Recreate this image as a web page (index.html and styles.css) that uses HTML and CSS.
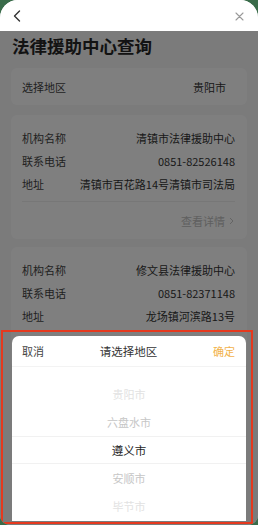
FILE: index.html
```html
<!DOCTYPE html>
<html lang="zh-CN">
<head>
<meta charset="utf-8">
<title>法律援助中心查询</title>
<link rel="stylesheet" href="styles.css">
</head>
<body>
<div class="phone">
  <header class="nav">
    <svg class="nav-back" width="8" height="12" viewBox="0 0 8 12"><path d="M6.5 1 L1.5 6 L6.5 11" fill="none" stroke="#333" stroke-width="1.4" stroke-linecap="round" stroke-linejoin="round"/></svg>
    <svg class="nav-close" width="9" height="9" viewBox="0 0 9 9"><path d="M1 1 L8 8 M8 1 L1 8" fill="none" stroke="#9a9a9a" stroke-width="1.1" stroke-linecap="round"/></svg>
  </header>
  <main class="page">
    <h1 class="title">法律援助中心查询</h1>
    <section class="card region">
      <span class="label">选择地区</span>
      <span class="value">贵阳市</span>
    </section>
    <section class="card org">
      <div class="row"><span class="label">机构名称</span><span class="value">清镇市法律援助中心</span></div>
      <div class="row"><span class="label">联系电话</span><span class="value">0851-82526148</span></div>
      <div class="row"><span class="label">地址</span><span class="value">清镇市百花路14号清镇市司法局</span></div>
      <div class="divider"></div>
      <div class="detail">查看详情<svg class="chev" width="5" height="8" viewBox="0 0 5 8"><path d="M1 1 L4 4 L1 7" fill="none" stroke="#c8c8c8" stroke-width="1"/></svg></div>
    </section>
    <section class="card org org-2">
      <div class="row"><span class="label">机构名称</span><span class="value">修文县法律援助中心</span></div>
      <div class="row"><span class="label">联系电话</span><span class="value">0851-82371148</span></div>
      <div class="row"><span class="label">地址</span><span class="value">龙场镇河滨路13号</span></div>
    </section>
  </main>
  <div class="mask"></div>
  <div class="popup">
    <div class="popup-head">
      <span class="cancel">取消</span>
      <span class="popup-title">请选择地区</span>
      <span class="confirm">确定</span>
    </div>
    <div class="picker">
      <div class="item far">贵阳市</div>
      <div class="item near">六盘水市</div>
      <div class="item selected">遵义市</div>
      <div class="item near">安顺市</div>
      <div class="item far">毕节市</div>
    </div>
  </div>
  <div class="annot"></div>
</div>
</body>
</html>
```

FILE: styles.css
```css
* { box-sizing: border-box; }
html, body { margin: 0; padding: 0; }
body {
  background: #3a6c4a;
  font-family: "Noto Sans CJK SC", "Noto Sans", sans-serif;
  width: 258px;
  height: 525px;
  overflow: hidden;
}
.phone {
  position: relative;
  width: 258px;
  height: 525px;
  background: #f6f6f7;
  border-radius: 18px 18px 10px 10px;
  overflow: hidden;
}
.nav {
  height: 31px;
  background: #fff;
  display: flex;
  align-items: center;
  justify-content: space-between;
  padding: 1px 13px 0 13px;
}
.nav-close { margin-right: 1px; }
.page {
  padding: 3px 11px 0 11px;
}
.title {
  margin: 0 0 10px 1px;
  font-size: 17.5px;
  line-height: 24px;
  font-weight: 700;
  color: #262626;
  letter-spacing: 0;
}
.card {
  background: #fff;
  border-radius: 6px;
  font-size: 11px;
}
.label { color: #444; }
.value { color: #333; }
.region {
  height: 37px;
  display: flex;
  align-items: center;
  justify-content: space-between;
  padding: 0 21px 0 11px;
}
.org {
  margin-top: 10px;
  padding: 12px 12px 7px 11px;
}
.org-2 {
  margin-top: 8px;
  padding-bottom: 40px;
}
.row {
  display: flex;
  justify-content: space-between;
  align-items: center;
  height: 23px;
  line-height: 23px;
  white-space: nowrap;
}
.divider {
  height: 1px;
  background: #eeeeee;
  margin-top: 5px;
}
.detail {
  margin-top: 7px;
  height: 23px;
  display: flex;
  align-items: center;
  justify-content: flex-end;
  gap: 4px;
  color: #c0c0c0;
  padding-right: 1px;
}
.mask {
  position: absolute;
  top: 31px;
  left: 0;
  right: 0;
  bottom: 0;
  background: rgba(0, 0, 0, 0.5);
}
.popup {
  position: absolute;
  left: 12px;
  right: 12px;
  bottom: 4px;
  height: 185px;
  background: #fff;
  border-radius: 7px 7px 0 0;
  overflow: hidden;
}
.popup-head {
  height: 31px;
  display: flex;
  align-items: center;
  justify-content: space-between;
  padding: 0 11px 1px 10px;
  border-bottom: 1px solid #f3f3f3;
  font-size: 11px;
}
.cancel { color: #444; }
.popup-title { color: #333; font-size: 11.5px; }
.confirm { color: #f2b24a; }
.picker {
  padding-top: 13px;
  text-align: center;
  font-size: 11px;
}
.item {
  height: 28px;
  line-height: 28px;
}
.item.far { color: #e2e2e2; }
.item.near { color: #c6c6c6; }
.item.selected {
  color: #1e1e1e;
  font-size: 11.5px;
  border-top: 1px solid #f1f1f1;
  border-bottom: 1px solid #f1f1f1;
  line-height: 26px;
}
.annot {
  position: absolute;
  left: 1px;
  top: 330px;
  width: 252px;
  height: 194px;
  border: 2px solid #e6391e;
}
```
